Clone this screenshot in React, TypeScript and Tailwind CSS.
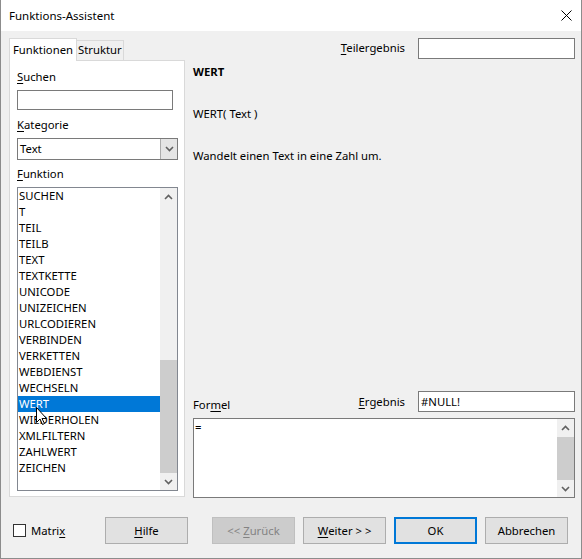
import React from 'react';

const FUNCS = [
  'SUCHEN', 'T', 'TEIL', 'TEILB', 'TEXT', 'TEXTKETTE', 'UNICODE', 'UNIZEICHEN',
  'URLCODIEREN', 'VERBINDEN', 'VERKETTEN', 'WEBDIENST', 'WECHSELN', 'WERT',
  'WIEDERHOLEN', 'XMLFILTERN', 'ZAHLWERT', 'ZEICHEN',
];

const FONT = { fontFamily: '"Noto Sans", "Open Sans", sans-serif' };

// access-key letter
const U = ({ children }: { children: React.ReactNode }) => (
  <span className="underline decoration-1 underline-offset-[2px]">{children}</span>
);

const Chevron = ({ up }: { up?: boolean }) => (
  <svg viewBox="0 0 9 6" className="w-[9px] h-[6px]" fill="none" stroke="#606060" strokeWidth="1.6">
    {up ? <polyline points="1,5 4.5,1.5 8,5" /> : <polyline points="1,1 4.5,4.5 8,1" />}
  </svg>
);

function ScrollBar({ thumb }: { thumb: React.ReactNode }) {
  return (
    <div className="w-[17px] flex flex-col bg-[#f0f0f0] shrink-0">
      <div className="h-[17px] flex items-center justify-center shrink-0"><Chevron up /></div>
      <div className="flex-1 flex flex-col">{thumb}</div>
      <div className="h-[17px] flex items-center justify-center shrink-0"><Chevron /></div>
    </div>
  );
}

function Button({ children, disabled, primary }: { children: React.ReactNode; disabled?: boolean; primary?: boolean }) {
  return (
    <div
      className={`w-[83px] h-[27px] shrink-0 flex items-center justify-center whitespace-pre pt-px
        ${disabled ? 'bg-[#cccccc] border border-[#bfbfbf] text-[#838383]' : 'bg-[#e1e1e1] text-black'}
        ${primary ? 'border-2 border-[#0078d7]' : ''}
        ${!disabled && !primary ? 'border border-[#adadad]' : ''}`}
    >
      {children}
    </div>
  );
}

export default function App() {
  return (
    <div className="w-[582px] h-[559px] flex flex-col bg-[#f0f0f0] border-x border-b border-[#8c8c8c] text-[11.3px] text-black leading-4 select-none" style={FONT}>
      {/* title bar */}
      <div className="h-[31px] bg-white flex items-center justify-between pl-[8px] pr-[9px] shrink-0">
        <span className="text-[11.5px]">Funktions-Assistent</span>
        <svg viewBox="0 0 11 11" className="w-[11px] h-[11px]" stroke="#000" strokeWidth="1">
          <line x1="0.5" y1="0.5" x2="10.5" y2="10.5" />
          <line x1="10.5" y1="0.5" x2="0.5" y2="10.5" />
        </svg>
      </div>

      <div className="flex-1 flex flex-col pl-[8px] pr-[6px] pt-[7px]">
        <div className="flex h-[460px]">
          {/* left column: tabs */}
          <div className="w-[176px] flex flex-col">
            <div className="flex items-end h-[22px]">
              <div className="h-[23px] w-[68px] bg-white border-t border-x border-[#d9d9d9] pl-[3px] pt-[3px] relative z-10 -mb-px">
                Funktionen
              </div>
              <div className="h-[20px] w-[47px] bg-[#f0f0f0] border-t border-r border-[#d9d9d9] pl-[1px] pt-[1px]">
                Struktur
              </div>
            </div>
            <div className="h-[437px] bg-white border border-[#d9d9d9] pl-[7px] pt-[8px] flex flex-col">
              <div className="h-4"><U>S</U>uchen</div>
              <div className="mt-[5px] w-[156px] h-[20px] border border-[#7a7a7a] bg-white" />
              <div className="mt-[7px] h-4"><U>K</U>ategorie</div>
              <div className="mt-[5px] w-[161px] h-[22px] border border-[#7a7a7a] bg-white flex">
                <div className="flex-1 pl-[2px] flex items-center">Text</div>
                <div className="w-[17px] bg-[#e5e5e5] border-l border-[#acacac] flex items-center justify-center">
                  <Chevron />
                </div>
              </div>
              <div className="mt-[6px] h-4"><U>F</U>unktion</div>
              <div className="mt-[5px] w-[161px] h-[304px] border border-[#828790] bg-white flex relative">
                <div className="flex-1 flex flex-col">
                  {FUNCS.map(f => (
                    <div key={f} className={`h-4 pl-[1px] ${f === 'WERT' ? 'bg-[#0078d7] text-white' : ''}`}>{f}</div>
                  ))}
                </div>
                <ScrollBar
                  thumb={<>
                    <div className="h-[155px]" />
                    <div className="h-[113px] bg-[#cdcdcd]" />
                  </>}
                />
                {/* mouse pointer */}
                <svg viewBox="0 0 12 19" className="absolute left-[18px] top-[219px] w-[12px] h-[19px]">
                  <path d="M0.5 0.5 L0.5 15.5 L4 12 L6.5 17.5 L8.5 16.5 L6 11.5 L10.5 11.5 Z" fill="#fff" stroke="#000" strokeWidth="1" strokeLinejoin="round" />
                </svg>
              </div>
            </div>
          </div>

          {/* right column */}
          <div className="flex-1 flex flex-col pl-[8px]">
            <div className="h-[20px] flex items-center justify-end gap-[13px]">
              <span><U>T</U>eilergebnis</span>
              <div className="w-[157px] h-[21px] border border-[#7a7a7a] bg-white" />
            </div>
            <div className="mt-[6px] font-bold h-4">WERT</div>
            <div className="mt-[26px] h-4">WERT( Text )</div>
            <div className="mt-[26px] h-4">Wandelt einen Text in eine Zahl um.</div>
            <div className="flex-1" />
            <div className="h-[21px] flex items-center justify-between">
              <span className="mt-[6px]">For<U>m</U>el</span>
              <div className="flex items-center gap-[13px]">
                <span><U>E</U>rgebnis</span>
                <div className="w-[157px] h-[21px] border border-[#7a7a7a] bg-white pl-[2px] flex items-center">#NULL!</div>
              </div>
            </div>
            <div className="mt-[6px] h-[80px] border border-[#7a7a7a] bg-white flex">
              <div className="flex-1 pl-[1px]">=</div>
              <ScrollBar
                thumb={<>
                  <div className="h-[1px]" />
                  <div className="h-[43px] bg-[#cdcdcd]" />
                </>}
              />
            </div>
          </div>
        </div>

        {/* button row */}
        <div className="mt-[19px] h-[27px] flex items-center">
          <div className="w-[96px] flex items-center">
            <div className="ml-[4px] w-[13px] h-[13px] border border-[#333] bg-white" />
            <span className="ml-[5px]">Matri<U>x</U></span>
          </div>
          <Button><U>H</U>ilfe</Button>
          <div className="ml-[24px] flex gap-[8px]">
            <Button disabled>{'<< '}<U>Z</U>urück</Button>
            <Button><U>W</U>{'eiter > >'}</Button>
            <Button primary>OK</Button>
            <Button>Abbrechen</Button>
          </div>
        </div>
      </div>
    </div>
  );
}
